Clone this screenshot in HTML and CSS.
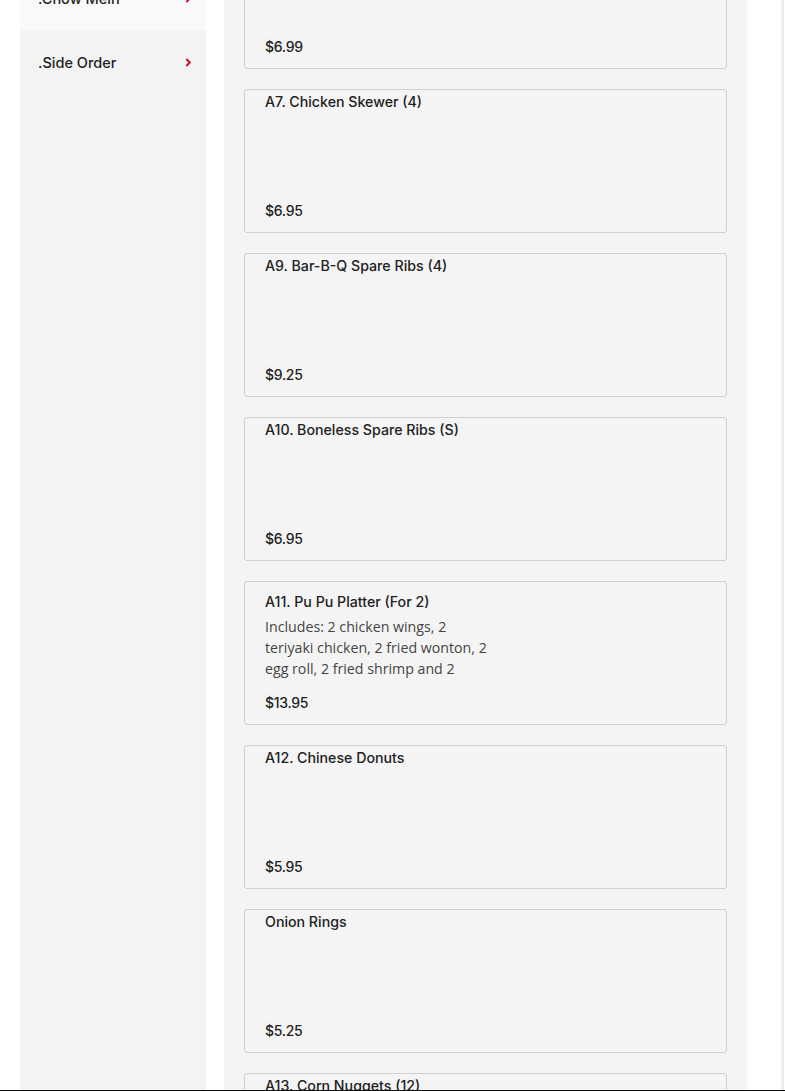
FILE: index.html
```html
<!DOCTYPE html>
<html>
<head>
<meta charset="utf-8">
<link rel="stylesheet" href="styles.css">
</head>
<body>
<div class="page">
  <aside class="sidebar">
    <div class="cat cat-light"><span>.Chow Mein</span><svg class="chev" viewBox="0 0 8 10" width="7" height="9"><path d="M1.5 1 L5.5 5 L1.5 9" fill="none" stroke="#c8102e" stroke-width="2.2"/></svg></div>
    <div class="cat"><span>.Side Order</span><svg class="chev" viewBox="0 0 8 10" width="7" height="9"><path d="M1.5 1 L5.5 5 L1.5 9" fill="none" stroke="#c8102e" stroke-width="2.2"/></svg></div>
  </aside>
  <main class="menu">
    <div class="card"><div class="title">A6. Egg Roll (2)</div><div class="price">$6.99</div></div>
    <div class="card"><div class="title">A7. Chicken Skewer (4)</div><div class="price">$6.95</div></div>
    <div class="card"><div class="title">A9. Bar-B-Q Spare Ribs (4)</div><div class="price">$9.25</div></div>
    <div class="card"><div class="title">A10. Boneless Spare Ribs (S)</div><div class="price">$6.95</div></div>
    <div class="card has-desc"><div class="title">A11. Pu Pu Platter (For 2)</div><div class="desc">Includes: 2 chicken wings, 2 teriyaki chicken, 2 fried wonton, 2 egg roll, 2 fried shrimp and 2 crab&nbsp;rangoon.</div><div class="price">$13.95</div></div>
    <div class="card"><div class="title">A12. Chinese Donuts</div><div class="price">$5.95</div></div>
    <div class="card"><div class="title">Onion Rings</div><div class="price">$5.25</div></div>
    <div class="card"><div class="title">A13. Corn Nuggets (12)</div><div class="price">$6.95</div></div>
  </main>
  <div class="rail"></div>
</div>
<div class="bottombar"></div>
</body>
</html>
```
FILE: styles.css
```css
html, body {
  margin: 0;
  padding: 0;
  background: #ffffff;
  overflow: hidden;
  height: 1091px;
}
.page {
  display: flex;
  align-items: flex-start;
  margin-top: -95px;
  padding-left: 20px;
  gap: 18px;
  font-family: Inter, "Noto Sans", sans-serif;
  color: #222;
}
.sidebar {
  width: 186px;
  flex: none;
  background: #f3f3f3;
  padding-top: 61px;
  height: 1300px;
}
.cat {
  height: 64px;
  display: flex;
  align-items: center;
  justify-content: space-between;
  padding: 0 14px 0 18px;
  font-size: 14.5px;
  font-weight: 500;
  color: #222;
}
.cat-light {
  background: #f9f9f9;
}
.chev { display: block; }
.menu {
  width: 483px;
  flex: none;
  background: #f4f4f4;
  padding: 20px;
  display: flex;
  flex-direction: column;
  gap: 20px;
}
.card {
  box-sizing: border-box;
  height: 144px;
  border: 1px solid #cfcfcf;
  border-radius: 3px;
  background: #f4f4f4;
  padding: 1px 20px 11px 20px;
  display: flex;
  flex-direction: column;
}
.card.has-desc {
  padding-top: 9px;
}
.title {
  font-size: 14.2px;
  font-weight: 500;
  line-height: 22px;
  color: #222;
}
.desc {
  margin-top: 3px;
  width: 228px;
  font-family: "Open Sans", sans-serif;
  font-size: 14.2px;
  line-height: 21px;
  color: #444;
  height: 63px;
  overflow: hidden;
}
.price {
  margin-top: auto;
  font-size: 14px;
  font-weight: 500;
  line-height: 20px;
  color: #222;
  letter-spacing: -0.3px;
}
.rail {
  margin-left: 15px;
  width: 4px;
  height: 1300px;
  flex: none;
  background: linear-gradient(to right, #ffffff, #e6e6e6);
}
.bottombar {
  position: fixed;
  left: 0;
  right: 0;
  bottom: 0;
  height: 1px;
  background: #111;
}
```
